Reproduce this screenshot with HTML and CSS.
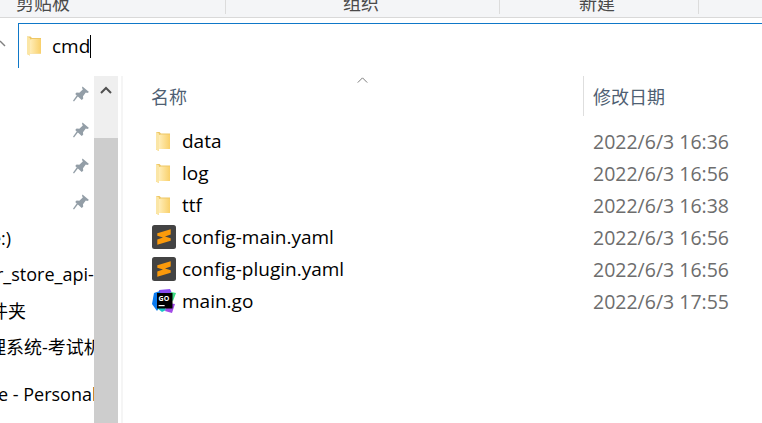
FILE: index.html
```html
<!DOCTYPE html>
<html lang="zh">
<head>
<meta charset="utf-8">
<title>cmd</title>
<link rel="stylesheet" href="styles.css">
</head>
<body>
<svg class="defs" width="0" height="0" aria-hidden="true">
  <defs>
    <linearGradient id="fg" x1="0" y1="0" x2="1" y2="0">
      <stop offset="0" stop-color="#ffedb8"/>
      <stop offset="1" stop-color="#f9d06a"/>
    </linearGradient>
    <symbol id="folder" viewBox="0 0 14 19">
      <path d="M0 0H3.5L5 1.5H14V17H3V19L0 17.5Z" fill="#eec765"/>
      <path d="M0 0L3 1.5V19L0 17.5Z" fill="#fbe6a6"/>
      <path d="M3 3L5 2.5H14V17H3Z" fill="url(#fg)"/>
    </symbol>
    <symbol id="pin" viewBox="0 0 16 16">
      <path d="M9.5 0.5L16 6L14.3 7L12.8 6.6L10 10.2L10.2 12.8L8.7 14L2.2 8L3.6 6.6L6.3 6.8L9.8 3.6L9 1.8Z" fill="#939ea7"/>
      <path d="M5.2 10L1 15.5L0 14.8L4 9Z" fill="#939ea7"/>
    </symbol>
    <symbol id="sublime" viewBox="0 0 24 24">
      <rect width="24" height="24" rx="2.5" fill="#434343"/>
      <path d="M18.7 4.3V9.6L13 11.4L18.7 13.2V15.7L5.3 19.7V14.4L11 12.6L5.3 10.8V8.3Z" fill="#fb9a0b"/>
    </symbol>
  </defs>
</svg>

<header class="ribbon">
  <div class="group group-clip"><span>剪贴板</span></div>
  <div class="group group-org"><span>组织</span></div>
  <div class="group group-new"><span>新建</span></div>
  <div class="group group-rest"></div>
</header>

<div class="address">
  <svg class="back" viewBox="0 0 6 8" aria-hidden="true"><path d="M0 1L5 6" /></svg>
  <div class="address-box">
    <svg class="address-folder"><use href="#folder"/></svg>
    <span class="address-text">cmd</span><i class="caret"></i>
  </div>
</div>

<main class="body">
  <nav class="nav">
    <div class="nav-row"><svg class="pin"><use href="#pin"/></svg></div>
    <div class="nav-row"><svg class="pin"><use href="#pin"/></svg></div>
    <div class="nav-row"><svg class="pin"><use href="#pin"/></svg></div>
    <div class="nav-row"><svg class="pin"><use href="#pin"/></svg></div>
    <div class="nav-row nav-text"><span class="l-disk">e:)</span></div>
    <div class="nav-row nav-text"><span class="l-store">r_store_api-server</span></div>
    <div class="nav-row nav-text"><span class="l-folder">件夹</span></div>
    <div class="nav-row nav-text"><span class="l-sys">理系统-考试机器</span></div>
    <div class="nav-row nav-text nav-od"><span class="l-od">e - Personal</span></div>
  </nav>
  <div class="scrollbar">
    <div class="scroll-track">
      <svg class="scroll-up" viewBox="0 0 12 8" aria-hidden="true"><path d="M1 7L6 2L11 7"/></svg>
    </div>
    <div class="scroll-thumb"></div>
  </div>
  <section class="list">
    <div class="list-head">
      <div class="col-name">名称
        <svg class="sort" viewBox="0 0 12 7" aria-hidden="true"><path d="M0.5 6.5L6 1L11.5 6.5"/></svg>
      </div>
      <div class="col-date">修改日期</div>
    </div>
    <div class="file"><div class="file-name"><span class="file-icon"><svg class="folder"><use href="#folder"/></svg></span>data</div><div class="file-date">2022/6/3 16:36</div></div>
    <div class="file"><div class="file-name"><span class="file-icon"><svg class="folder"><use href="#folder"/></svg></span>log</div><div class="file-date">2022/6/3 16:56</div></div>
    <div class="file"><div class="file-name"><span class="file-icon"><svg class="folder"><use href="#folder"/></svg></span>ttf</div><div class="file-date">2022/6/3 16:38</div></div>
    <div class="file"><div class="file-name"><span class="file-icon"><svg class="app"><use href="#sublime"/></svg></span>config-main.yaml</div><div class="file-date">2022/6/3 16:56</div></div>
    <div class="file"><div class="file-name"><span class="file-icon"><svg class="app"><use href="#sublime"/></svg></span>config-plugin.yaml</div><div class="file-date">2022/6/3 16:56</div></div>
    <div class="file"><div class="file-name"><span class="file-icon">
      <svg class="app" viewBox="0 0 24 24" aria-hidden="true">
        <path d="M7 1L18 0L20 4L15 12L8 8Z" fill="#8a4bf0"/>
        <path d="M19 3L24 4L21 12L16 8Z" fill="#3ddc84"/>
        <path d="M2 4L8 2L10 14L5 22L0 15Z" fill="#0b7bf0"/>
        <path d="M5 19L10 23L14 21L12 15Z" fill="#19c6c6"/>
        <path d="M13 22L20 24L23 15L16 14Z" fill="#a24be8"/>
        <rect x="5" y="4" width="15.5" height="15.5" fill="#000"/>
        <text class="go-text" x="6.6" y="11.6">GO</text>
        <rect x="6.6" y="16" width="6" height="1.2" fill="#fff"/>
      </svg></span>main.go</div><div class="file-date">2022/6/3 17:55</div></div>
  </section>
</main>
</body>
</html>
```
FILE: styles.css
```css
* { box-sizing: border-box; }
html, body { margin: 0; padding: 0; }
body {
  width: 762px;
  height: 423px;
  overflow: hidden;
  background: #fff;
  color: #000;
  font-family: "Open Sans", "Noto Sans CJK SC", sans-serif;
}
.defs { position: absolute; }

.ribbon {
  display: flex;
  height: 18px;
  overflow: hidden;
  background: #f4f5f7;
  border-bottom: 1px solid #d9d9d9;
  font-family: "Noto Sans CJK SC", sans-serif;
  font-size: 18px;
  line-height: 24px;
  color: #4a4a4a;
}
.group {
  height: 14px;
  border-right: 1px solid #dcdcdc;
  display: flex;
  align-items: flex-end;
}
.group span { display: block; margin-bottom: 0; }
.group-clip { width: 226px; padding-left: 16px; }
.group-org { width: 274px; padding-left: 117px; }
.group-new { width: 199px; padding-left: 79px; }
.group-rest { flex: 1; border-right: 0; }

.address {
  display: flex;
  height: 50px;
  padding-top: 5px;
}
.back { width: 6px; height: 8px; margin-top: 17px; margin-right: 12px; flex: none; }
.back path { fill: none; stroke: #808080; stroke-width: 1.4; }
.address-box {
  flex: 1;
  display: flex;
  align-items: center;
  height: 45px;
  padding-left: 8px;
  border-top: 1px solid #0f78c8;
  border-left: 1px solid #0f78c8;
}
.address-folder { width: 14px; height: 20px; margin-right: 11px; flex: none; }
.address-text { font-size: 19px; line-height: 24px; }
.caret { display: block; width: 1px; height: 23px; background: #000; }

.body { display: flex; height: 355px; margin-top: 8px; }

.nav {
  width: 94px;
  flex: none;
  overflow: hidden;
  font-size: 18px;
}
.nav-row {
  height: 36px;
  display: flex;
  align-items: center;
  justify-content: flex-end;
  padding-right: 5px;
  white-space: nowrap;
}
.nav-text { justify-content: flex-start; padding-right: 0; font-family: "Open Sans", "Noto Sans CJK SC", sans-serif; }
.nav-od { margin-top: 12px; }
.pin { width: 16px; height: 16px; }
.l-disk { margin-left: -9px; }
.l-store { margin-left: -4px; }
.l-folder { margin-left: -10px; }
.l-sys { margin-left: -12px; }
.l-od { margin-left: -2px; }

.scrollbar {
  width: 24px;
  flex: none;
  display: flex;
  flex-direction: column;
  background: #cdcdcd;
}
.scroll-track {
  height: 62px;
  background: #efefef;
  display: flex;
  justify-content: center;
  padding-top: 10px;
}
.scroll-up { width: 12px; height: 8px; }
.scroll-up path { fill: none; stroke: #505050; stroke-width: 2; }
.scroll-thumb { flex: 1; }

.list {
  flex: 1;
  margin-left: 3px;
  padding-left: 28px;
  border-left: 2px solid #f5f5f5;
}
.list-head {
  display: flex;
  height: 40px;
  margin-bottom: 9px;
  color: #4f5f73;
  font-family: "Noto Sans CJK SC", sans-serif;
  font-size: 18px;
  line-height: 40px;
}
.col-name { width: 432px; position: relative; }
.sort { position: absolute; left: 206px; top: 1px; width: 11px; height: 6px; }
.sort path { fill: none; stroke: #666; stroke-width: 1; }
.col-date { flex: 1; padding-left: 9px; border-left: 1px solid #dedede; }

.file { display: flex; height: 32px; align-items: center; font-size: 19px; }
.file-name { width: 442px; display: flex; align-items: center; white-space: nowrap; }
.file-icon { width: 31px; height: 24px; display: flex; align-items: center; padding-left: 1px; flex: none; }
.folder { width: 14px; height: 19px; margin-left: 4px; }
.app { width: 24px; height: 24px; display: block; }
.go-text { font-family: "Open Sans", sans-serif; font-size: 7px; font-weight: 700; fill: #fff; }
.file-date { color: #6d6d6d; white-space: nowrap; font-size: 19.5px; }
```
